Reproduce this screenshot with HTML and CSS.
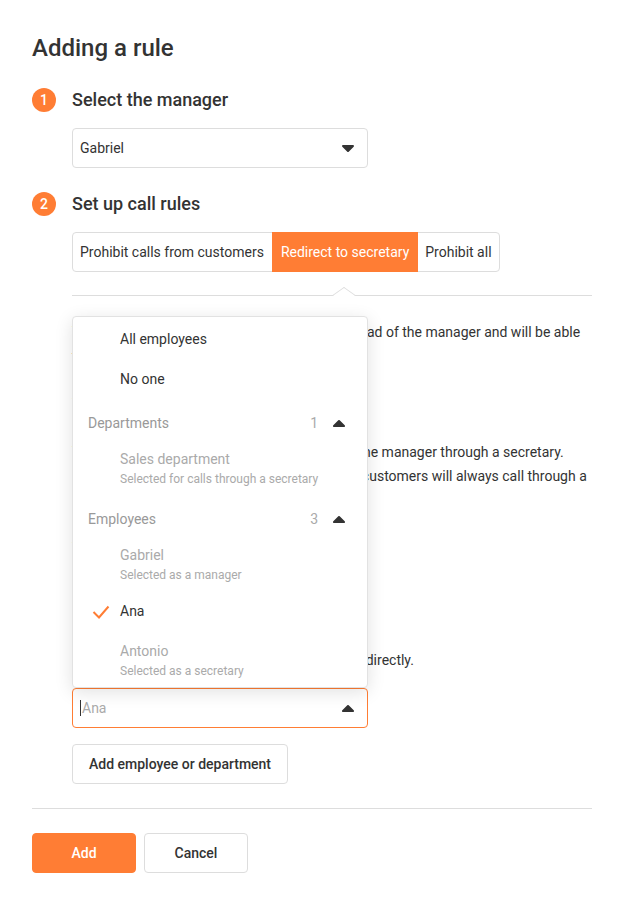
FILE: index.html
```html
<!DOCTYPE html>
<html lang="en">
<head>
  <meta charset="UTF-8">
  <meta name="viewport" content="width=device-width, initial-scale=1.0">
  <title>Adding a rule</title>
  <link rel="stylesheet" href="styles.css">
</head>
<body>
  <div class="page">
    <h1 class="title">Adding a rule</h1>

    <section class="step">
      <div class="step-head">
        <span class="step-num">1</span>
        <h2>Select the manager</h2>
      </div>
      <div class="step-body">
        <div class="select">
          <span class="select-value">Gabriel</span>
          <svg class="caret" width="12" height="7" viewBox="0 0 12 7"><path d="M1 0h10a1 1 0 0 1 .7 1.7l-5 5a1 1 0 0 1-1.4 0l-5-5A1 1 0 0 1 1 0z"/></svg>
        </div>
      </div>
    </section>

    <section class="step">
      <div class="step-head">
        <span class="step-num">2</span>
        <h2>Set up call rules</h2>
      </div>
      <div class="step-body">
        <div class="segmented">
          <button class="segment">Prohibit calls from customers</button>
          <button class="segment active">Redirect to secretary</button>
          <button class="segment">Prohibit all</button>
        </div>
        <div class="tab-line"></div>

        <div class="rule-text">
          <p>
            <span class="line">The secretary will answer calls from users instead of the manager and will be able</span>
            <span class="line">to transfer them to the manager.</span>
          </p>
          <h3>Who calls through a secretary</h3>
          <p>
            <span class="line">The employees and departments will only call the manager through a secretary.</span>
            <span class="line">Other employees, departments, managers and customers will always call through a</span>
            <span class="line">secretary.</span>
          </p>
          <h3>Who calls directly</h3>
          <p class="last">
            <span class="line">Nobody is selected yet.</span>
            <span class="line">Everyone including users, can call the manager directly.</span>
          </p>
        </div>

        <div class="combo">
          <div class="menu">
            <div class="menu-item">All employees</div>
            <div class="menu-item">No one</div>

            <div class="menu-group">
              <span class="group-name">Departments</span>
              <span class="group-count">1</span>
              <svg class="caret up" width="12" height="7" viewBox="0 0 12 7"><path d="M1 0h10a1 1 0 0 1 .7 1.7l-5 5a1 1 0 0 1-1.4 0l-5-5A1 1 0 0 1 1 0z"/></svg>
            </div>
            <div class="menu-item disabled">
              <div class="item-name">Sales department</div>
              <div class="item-note">Selected for calls through a secretary</div>
            </div>

            <div class="menu-group">
              <span class="group-name">Employees</span>
              <span class="group-count">3</span>
              <svg class="caret up" width="12" height="7" viewBox="0 0 12 7"><path d="M1 0h10a1 1 0 0 1 .7 1.7l-5 5a1 1 0 0 1-1.4 0l-5-5A1 1 0 0 1 1 0z"/></svg>
            </div>
            <div class="menu-item disabled">
              <div class="item-name">Gabriel</div>
              <div class="item-note">Selected as a manager</div>
            </div>
            <div class="menu-item checked">
              <svg class="check" width="18" height="14" viewBox="0 0 18 14"><path d="M1.5 7l5.5 5.5L16.5 1.5"/></svg>
              Ana
            </div>
            <div class="menu-item disabled">
              <div class="item-name">Antonio</div>
              <div class="item-note">Selected as a secretary</div>
            </div>
          </div>

          <div class="select open">
            <span class="cursor"></span>
            <span class="select-placeholder">Ana</span>
            <svg class="caret up" width="12" height="7" viewBox="0 0 12 7"><path d="M1 0h10a1 1 0 0 1 .7 1.7l-5 5a1 1 0 0 1-1.4 0l-5-5A1 1 0 0 1 1 0z"/></svg>
          </div>
        </div>

        <button class="btn">Add employee or department</button>
      </div>
    </section>

    <div class="footer">
      <button class="btn btn-primary">Add</button>
      <button class="btn">Cancel</button>
    </div>
  </div>
</body>
</html>
```

FILE: styles.css
```css
body {
  margin: 0;
  font-family: Roboto, "Liberation Sans", Arial, sans-serif;
  font-size: 14px;
  color: #333;
  background: #fff;
}
.page {
  padding: 32px;
}
.title {
  margin: 0;
  font-size: 24px;
  line-height: 32px;
  font-weight: 500;
  color: #333;
}
.step {
  margin-top: 24px;
}
.step-head {
  display: flex;
  align-items: center;
  gap: 16px;
  height: 24px;
}
.step-head h2 {
  margin: 0;
  font-size: 18px;
  font-weight: 500;
  line-height: 24px;
}
.step-num {
  width: 24px;
  height: 24px;
  border-radius: 50%;
  background: #ff7d34;
  color: #fff;
  font-size: 14px;
  font-weight: 500;
  display: flex;
  align-items: center;
  justify-content: center;
}
.step-body {
  margin-left: 40px;
  padding-top: 16px;
}

/* select box */
.select {
  width: 296px;
  height: 40px;
  box-sizing: border-box;
  border: 1px solid #ddd;
  border-radius: 4px;
  display: flex;
  align-items: center;
  padding: 0 13px 0 7px;
  background: #fff;
}
.select-value {
  flex: 1;
}
.caret {
  fill: #333;
  flex: none;
}
.caret.up {
  transform: rotate(180deg);
}
.select.open {
  border-color: #ff7d34;
}
.cursor {
  width: 1px;
  height: 16px;
  background: #333;
  margin-right: 1px;
}
.select-placeholder {
  flex: 1;
  color: #aaa;
}

/* rule switcher */
.segmented {
  display: inline-flex;
  height: 40px;
  box-sizing: border-box;
  border: 1px solid #ddd;
  border-radius: 4px;
}
.segment {
  font: inherit;
  color: #333;
  background: none;
  border: none;
  padding: 0 7px;
  cursor: pointer;
}
.segment:first-child {
  padding-right: 8px;
}
.segment.active {
  background: #ff7d34;
  color: #fff;
  margin: -1px 0;
  padding: 0 9px;
}
.tab-line {
  position: relative;
  height: 1px;
  background: #ddd;
  margin-top: 23px;
}
/* notch under the active tab */
.tab-line::after {
  content: "";
  position: absolute;
  left: 264px;
  top: -8px;
  width: 16px;
  height: 16px;
  box-sizing: border-box;
  background: #fff;
  border-top: 1px solid #ddd;
  border-left: 1px solid #ddd;
  transform: scaleY(0.7) rotate(45deg);
}

.rule-text {
  padding-top: 24px;
  line-height: 24px;
}
.rule-text p {
  margin: 0;
}
.rule-text h3 {
  margin: 24px 0;
  font-size: 14px;
  font-weight: 500;
  line-height: 24px;
}
.rule-text p.last {
  margin-top: 64px;
}
.line {
  display: block;
  white-space: nowrap;
}

/* dropdown */
.combo {
  position: relative;
  width: 296px;
  margin-top: 16px;
}
.menu {
  position: absolute;
  left: 0;
  bottom: 100%;
  width: 296px;
  box-sizing: border-box;
  background: #fff;
  border: 1px solid #e2e2e2;
  border-radius: 4px;
  padding-top: 2px;
  box-shadow: 0 4px 18px rgba(0, 0, 0, 0.12);
  z-index: 2;
}
.menu-item {
  min-height: 40px;
  box-sizing: border-box;
  padding: 8px 16px 8px 47px;
  line-height: 24px;
  position: relative;
}
.menu-item.disabled {
  color: #aaa;
}
.item-name {
  line-height: 24px;
}
.item-note {
  font-size: 12px;
  line-height: 16px;
}
.menu-item.checked {
  color: #333;
}
.check {
  position: absolute;
  left: 19px;
  top: 14px;
  fill: none;
  stroke: #ff7d34;
  stroke-width: 2;
}
.menu-group {
  display: flex;
  align-items: center;
  height: 40px;
  box-sizing: border-box;
  padding: 8px 22px 0 15px;
  color: #999;
}
.group-name {
  flex: 1;
}
.group-count {
  margin-right: 15px;
  color: #aaa;
}

/* buttons */
.btn {
  font: inherit;
  font-weight: 500;
  color: #333;
  background: #fff;
  border: 1px solid #ddd;
  border-radius: 4px;
  height: 40px;
  padding: 0 16px;
  cursor: pointer;
}
.step-body > .btn {
  margin-top: 16px;
}
.footer {
  margin-top: 24px;
  border-top: 1px solid #ddd;
  padding-top: 24px;
  display: flex;
  gap: 8px;
}
.footer .btn {
  width: 104px;
}
.btn-primary {
  background: #ff7d34;
  border-color: #ff7d34;
  color: #fff;
}
```
